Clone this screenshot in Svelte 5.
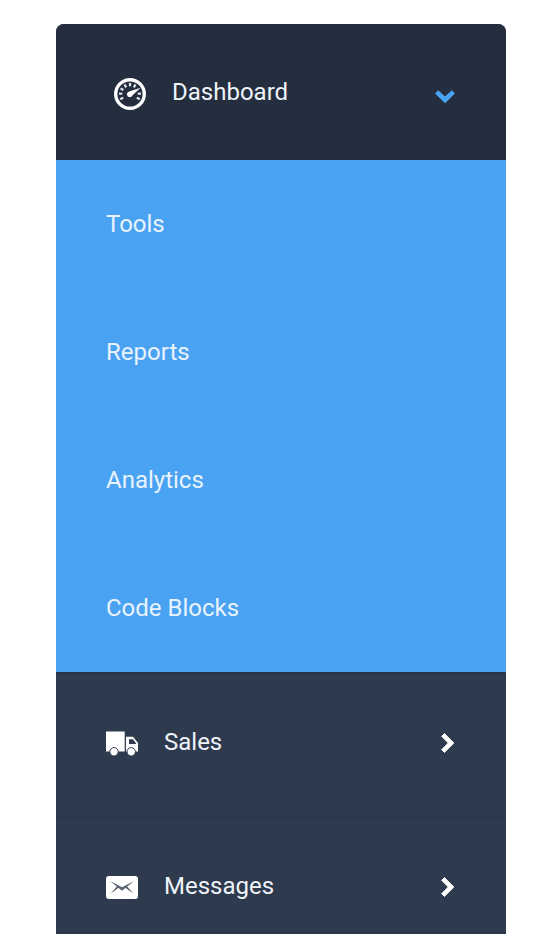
<script>
  const tools = ['Tools', 'Reports', 'Analytics', 'Code Blocks'];
  const ticks = [-118, -88, -59, -30, 0, 30, 88, 118];
</script>

<nav class="menu">
  <div class="head">
    <svg class="gauge" width="32" height="32" viewBox="0 0 32 32">
      <circle cx="16" cy="16" r="14.3" fill="none" stroke="#fff" stroke-width="3.4" />
      {#each ticks as angle}
        <path d="M16 5v3.3" transform="rotate({angle} 16 16)" stroke="#e4e7eb" stroke-width="2.2" />
      {/each}
      <path d="M26.6 9.8 18.6 17.2A2.9 2.9 0 1 1 15.2 13.4Z" fill="#fff" />
    </svg>
    <span class="label">Dashboard</span>
    <svg class="down" width="20" height="14" viewBox="0 0 20 14">
      <path d="M3.1 .7 10 7.1 16.9 .7 19.4 3.4 10 12.8 .6 3.4Z" fill="#4aa2f2" stroke="#4aa2f2" stroke-linejoin="round" />
    </svg>
  </div>
  <ul>
    {#each tools as name}
      <li>{name}</li>
    {/each}
  </ul>
  <div class="row">
    <svg class="icon truck" width="32" height="26" viewBox="0 0 32 26">
      <path d="M0 .6h18.7v20H0zM20 5.7h7l5 6.2v8.7H20z" fill="#fff" />
      <path d="M23 8.2h4l3.4 4.8H23z" fill="#2e3a4d" />
      <g fill="#fff" stroke="#2e3a4d" stroke-width="1">
        <circle cx="8" cy="20.8" r="4.2" />
        <circle cx="25.2" cy="20.8" r="4.2" />
      </g>
    </svg>
    <span class="label">Sales</span>
    <svg class="right" width="14" height="20" viewBox="0 0 14 20">
      <path d="M3.4 .6 12.8 10 3.4 19.4 .7 16.7 7.3 10 .7 3.3Z" fill="#fff" stroke="#fff" stroke-linejoin="round" />
    </svg>
  </div>
  <div class="row">
    <svg class="icon" width="32" height="26" viewBox="0 0 32 26">
      <rect y="2" width="32" height="23" rx="3" fill="#fff" />
      <g fill="#59636f">
        <path d="M4 7 16 13.2 28 7 16 16.8Z" />
        <path d="M4.5 19.8 11 12.2 13 13.6ZM27.5 19.8 21 12.2 19 13.6Z" />
      </g>
    </svg>
    <span class="label">Messages</span>
    <svg class="right" width="14" height="20" viewBox="0 0 14 20">
      <path d="M3.4 .6 12.8 10 3.4 19.4 .7 16.7 7.3 10 .7 3.3Z" fill="#fff" stroke="#fff" stroke-linejoin="round" />
    </svg>
  </div>
</nav>

<style>
  :global(body) {
    background: #fff;
  }
  .menu {
    box-sizing: border-box;
    width: 450px;
    height: 910px;
    margin: 24px 0 0 56px;
    overflow: hidden;
    border-bottom: 2px solid #2d354b;
    border-radius: 8px 8px 0 0;
    background: #2e3a4d;
    color: #eef4fa;
    font: 24px/32px Roboto, sans-serif;
  }
  .head,
  .row {
    box-sizing: border-box;
    display: flex;
    align-items: center;
  }
  .head {
    height: 136px;
    padding: 4px 51px 0 58px;
    background: #252e3f;
  }
  .label {
    flex: 1;
    margin: 0 0 4px 26px;
  }
  .down {
    margin-top: 6px;
  }
  ul {
    margin: 0;
    padding: 0;
    list-style: none;
    background: #4aa2f2;
    color: #e9f3fd;
  }
  li {
    box-sizing: border-box;
    height: 128px;
    padding: 48px 50px;
  }
  .row {
    height: 144px;
    padding: 0 51px 4px 50px;
    border-top: 2px solid #293246;
  }
  .row .label {
    margin-bottom: 2px;
  }
  .truck {
    margin-top: 2px;
  }
  .row + .row {
    border-top-color: #2e374a;
  }
</style>
